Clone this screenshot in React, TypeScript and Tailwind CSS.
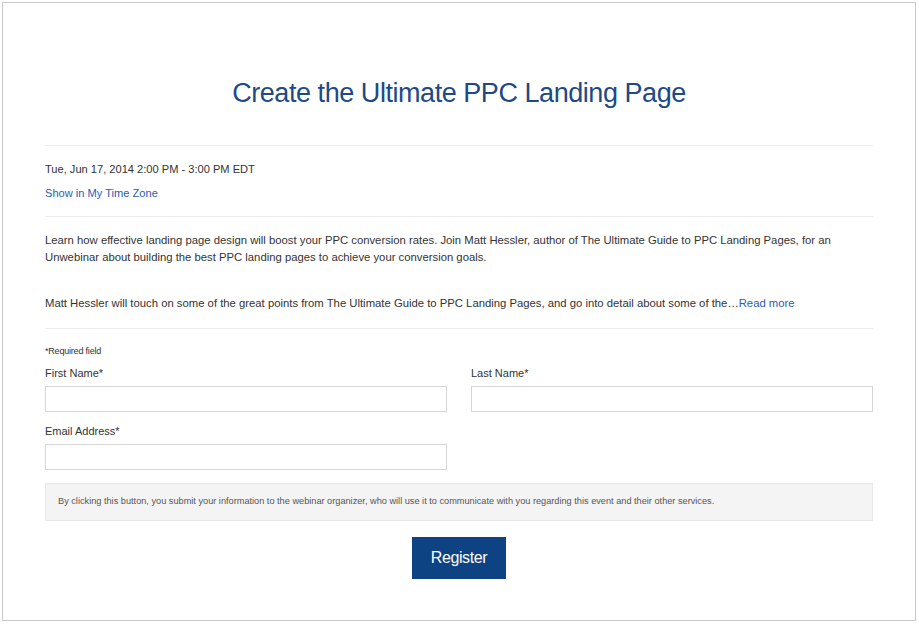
export default function App(): React.JSX.Element {
  return (
    <div className="h-[624px] w-[919px] bg-white pl-[2px] pt-[2px] font-['Liberation_Sans',Arial,sans-serif]">
      <div className="flex h-[619px] w-[914px] flex-col border border-[#c9c9c9] px-[42px]">
        <h1 className="mt-[72px] text-center text-[27px] leading-[36px] tracking-[-0.45px] text-[#1d4987]">
          Create the Ultimate PPC Landing Page
        </h1>
        <div className="mt-[34px] border-t border-[#ececec]" />
        <p className="mt-[16px] text-[11.1px] leading-[14px] text-[#333]">
          Tue, Jun 17, 2014 2:00 PM - 3:00 PM EDT
        </p>
        <a className="mt-[10px] text-[11.1px] leading-[14px] text-[#2a5db0]">
          Show in My Time Zone
        </a>
        <div className="mt-[16px] border-t border-[#ececec]" />
        <p className="mt-[15px] text-[11.3px] leading-[17px] text-[#333]">
          Learn how effective landing page design will boost your PPC conversion
          rates. Join Matt Hessler, author of The Ultimate Guide to PPC Landing
          Pages, for an Unwebinar about building the best PPC landing pages to
          achieve your conversion goals.
        </p>
        <p className="mt-[29px] text-[11.3px] leading-[17px] text-[#333]">
          Matt Hessler will touch on some of the great points from The Ultimate
          Guide to PPC Landing Pages, and go into detail about some of the…
          <a className="text-[#2a5db0]">Read more</a>
        </p>
        <div className="mt-[16px] border-t border-[#ececec]" />
        <p className="mt-[16px] text-[9px] leading-[12px] tracking-[-0.2px] text-[#333]">
          *Required field
        </p>
        <div className="mt-[9px] grid grid-cols-2 gap-x-[24px]">
          <label className="flex flex-col">
            <span className="text-[11px] leading-[14px] text-[#333]">
              First Name*
            </span>
            <input className="mt-[6px] h-[26px] border border-[#d6d6d6] outline-none" />
          </label>
          <label className="flex flex-col">
            <span className="text-[11px] leading-[14px] text-[#333]">
              Last Name*
            </span>
            <input className="mt-[6px] h-[26px] border border-[#d6d6d6] outline-none" />
          </label>
          <label className="mt-[12px] flex flex-col">
            <span className="text-[11px] leading-[14px] text-[#333]">
              Email Address*
            </span>
            <input className="mt-[6px] h-[26px] border border-[#d6d6d6] outline-none" />
          </label>
        </div>
        <div className="mt-[13px] flex h-[38px] items-center border border-[#e8e8e8] bg-[#f4f4f4] px-[12px] text-[9.2px] text-[#555]">
          By clicking this button, you submit your information to the webinar
          organizer, who will use it to communicate with you regarding this
          event and their other services.
        </div>
        <div className="mt-[16px] flex justify-center">
          <button className="h-[42px] w-[94px] bg-[#0d4283] text-[16px] tracking-[-0.4px] text-white">
            Register
          </button>
        </div>
      </div>
    </div>
  );
}
